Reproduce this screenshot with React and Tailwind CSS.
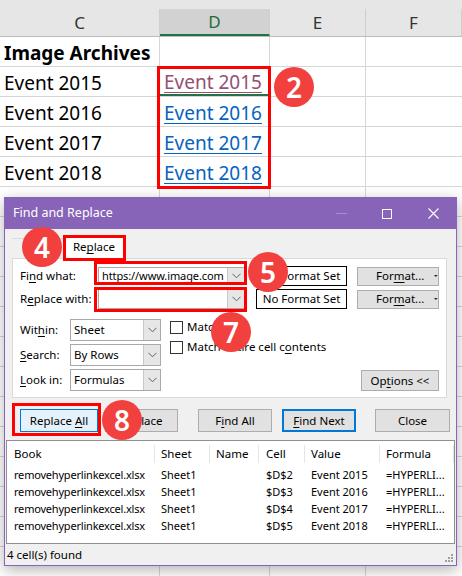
import React from 'react';

const cols = [
    { key: 'C', w: 'w-[160px]' },
    { key: 'D', w: 'w-[110px]' },
    { key: 'E', w: 'w-[96px]' },
    { key: 'F', w: 'w-[96px]' },
];

const sheetRows = [
    ['Image Archives', ''],
    ['Event 2015', 'Event 2015'],
    ['Event 2016', 'Event 2016'],
    ['Event 2017', 'Event 2017'],
    ['Event 2018', 'Event 2018'],
];

const results = [
    ['$D$2', 'Event 2015'],
    ['$D$3', 'Event 2016'],
    ['$D$4', 'Event 2017'],
    ['$D$5', 'Event 2018'],
];

// small helper for access-key underline
const U = ({ children }) => <span className="underline underline-offset-2">{children}</span>;

const Badge = ({ n, className }) => (
    <div className={`absolute w-[40px] h-[40px] rounded-full bg-[#f2403f] text-white flex items-center justify-center text-[28px] font-semibold leading-none ${className}`}>
        {n}
    </div>
);

const RedBox = ({ className }) => (
    <div className={`absolute border-[3px] border-[#ff0000] pointer-events-none ${className}`} />
);

const Chevron = () => (
    <svg width="9" height="6" viewBox="0 0 9 6" fill="none" stroke="#606060" strokeWidth="1">
        <path d="M0.5 0.8 L4.5 4.8 L8.5 0.8" />
    </svg>
);

const Combo = ({ value, w, h = 'h-[18px]', text = 'text-[11.5px]' }) => (
    <div className={`${w} ${h} flex bg-white border border-[#a9a9a9]`}>
        <div className={`flex-1 pl-[3px] flex items-center ${text} text-black whitespace-nowrap overflow-hidden`}>{value}</div>
        <div className="w-[17px] bg-[#e6e6e6] border-l border-[#c8c8c8] flex items-center justify-center">
            <Chevron />
        </div>
    </div>
);

const Btn = ({ children, className = '' }) => (
    <div className={`h-[23px] flex items-center justify-center text-[11.5px] text-black bg-[#e1e1e1] border border-[#adadad] ${className}`}>
        <span>{children}</span>
    </div>
);

const FormatBtn = () => (
    <div className="w-[82px] h-[19px] flex items-center bg-[#e1e1e1] border border-[#adadad] text-[11.5px] text-black pl-[18px]">
        <span>For<U>m</U>at...</span>
        <svg className="ml-[10px]" width="7" height="4" viewBox="0 0 7 4"><path d="M0 0 H7 L3.5 4 Z" fill="#222" /></svg>
    </div>
);

const Checkbox = () => <div className="w-[13px] h-[13px] bg-white border border-[#333] shrink-0" />;

export default function App() {
    return (
        <div className="relative w-[462px] h-[576px] overflow-hidden bg-white font-['Noto_Sans',sans-serif]">
            {/* spreadsheet */}
            <div className="h-[9px] bg-[#e6e6e6]" />
            <div className="flex h-[28px] bg-[#e6e6e6] border-b border-[#bcbcbc]">
                {cols.map(c => (
                    <div
                        key={c.key}
                        className={`${c.w} flex items-center justify-center text-[17px] border-r border-[#cfcfcf] ${c.key === 'D' ? 'bg-[#d2d2d2] text-[#1e6b3f] border-b-2 border-b-[#217346]' : 'text-[#333]'}`}
                    >
                        {c.key}
                    </div>
                ))}
            </div>
            {Array.from({ length: 18 }).map((_, i) => {
                const r = sheetRows[i] || ['', ''];
                return (
                    <div key={i} className="flex h-[30px] border-b border-[#d6d6d6]">
                        <div className={`w-[160px] border-r border-[#d6d6d6] pl-[4px] pt-[4px] flex items-center text-[19px] text-black whitespace-nowrap ${i === 0 ? 'font-bold' : ''}`}>
                            {r[0]}
                        </div>
                        <div className={`w-[110px] border-r border-[#d6d6d6] pl-[4px] pt-[4px] flex items-center text-[19px] ${i === 1 ? 'border-b-2 border-b-[#217346]' : ''}`}>
                            {r[1] && (
                                <span className={`underline underline-offset-[3px] ${i === 1 ? 'text-[#954f72]' : 'text-[#0563c1]'}`}>{r[1]}</span>
                            )}
                        </div>
                        <div className="w-[96px] border-r border-[#d6d6d6]" />
                        <div className="w-[96px]" />
                    </div>
                );
            })}

            {/* Find and Replace dialog */}
            <div className="absolute left-[4px] top-[197px] w-[453px] h-[369px] bg-[#f0f0f0] border border-[#8764b8] shadow-[0_4px_14px_rgba(0,0,0,0.3)] flex flex-col">
                <div className="h-[31px] bg-[#8764b8] flex items-center text-white shrink-0">
                    <span className="pl-[8px] text-[12.5px] flex-1">Find and Replace</span>
                    <div className="w-[46px] flex justify-center">
                        <div className="w-[11px] h-px bg-[#a68fcf]" />
                    </div>
                    <div className="w-[46px] flex justify-center">
                        <div className="w-[10px] h-[10px] border border-white" />
                    </div>
                    <div className="w-[46px] flex justify-center">
                        <svg width="11" height="11" viewBox="0 0 11 11" stroke="white" strokeWidth="1.1"><path d="M0.5 0.5 L10.5 10.5 M10.5 0.5 L0.5 10.5" /></svg>
                    </div>
                </div>

                {/* tab strip */}
                <div className="flex h-[29px] items-end pl-[7px] shrink-0">
                    <div className="w-[52px] border-t border-[#d9d9d9] self-start mt-[9px]" />
                    <div className="w-[60px] h-[22px] bg-white flex items-center justify-center text-[11.5px] text-black">
                        <span>Re<U>p</U>lace</span>
                    </div>
                </div>

                {/* tab pane */}
                <div className="ml-[7px] w-[435px] h-[140px] bg-white border border-[#d9d9d9] pl-[7px] pt-[8px] shrink-0 text-[11.5px] text-black">
                    <div className="flex items-center h-[18px]">
                        <div className="w-[78px]">Fi<U>n</U>d what:</div>
                        <Combo value="https://www.image.com" w="w-[147px]" text="text-[11px] tracking-[-0.1px]" />
                        <div className="ml-[11px] w-[91px] h-[20px] border border-black flex items-center justify-center">No Format Set</div>
                        <div className="ml-[10px]"><FormatBtn /></div>
                    </div>
                    <div className="flex items-center h-[20px] mt-[4px]">
                        <div className="w-[78px]">R<U>e</U>place with:</div>
                        <Combo value="" w="w-[147px]" h="h-[20px]" />
                        <div className="ml-[11px] w-[91px] h-[20px] border border-black flex items-center justify-center">No Format Set</div>
                        <div className="ml-[10px]"><FormatBtn /></div>
                    </div>

                    <div className="flex mt-[10px]">
                        <div className="flex flex-col gap-[3px]">
                            <div className="flex items-center">
                                <div className="w-[50px]">Wit<U>h</U>in:</div>
                                <Combo value="Sheet" w="w-[91px]" h="h-[22px]" />
                            </div>
                            <div className="flex items-center">
                                <div className="w-[50px]"><U>S</U>earch:</div>
                                <Combo value="By Rows" w="w-[91px]" h="h-[22px]" />
                            </div>
                            <div className="flex items-center">
                                <div className="w-[50px]"><U>L</U>ook in:</div>
                                <Combo value="Formulas" w="w-[91px]" h="h-[22px]" />
                            </div>
                        </div>
                        <div className="ml-[9px] flex flex-col gap-[6px] pt-[1px]">
                            <div className="flex items-center gap-[4px] h-[14px]">
                                <Checkbox /> <span>Match case</span>
                            </div>
                            <div className="flex items-center gap-[4px] h-[14px]">
                                <Checkbox /> <span>Match entire cell c<U>o</U>ntents</span>
                            </div>
                        </div>
                        <div className="ml-auto mr-[7px] self-end">
                            <Btn className="w-[78px] !h-[21px]">Op<U>t</U>ions &lt;&lt;</Btn>
                        </div>
                    </div>
                </div>

                {/* buttons */}
                <div className="flex items-center mt-[11px] pl-[15px] shrink-0">
                    <Btn className="w-[78px] !bg-[#e5f1fb] !border-[#0078d7]">Replace <U>A</U>ll</Btn>
                    <Btn className="w-[73px] ml-[7px]">Replace</Btn>
                    <Btn className="w-[74px] ml-[20px]">F<U>i</U>nd All</Btn>
                    <Btn className="w-[74px] ml-[10px] !border-2 !border-[#0078d7]"><U>F</U>ind Next</Btn>
                    <Btn className="w-[75px] ml-[19px]">Close</Btn>
                </div>

                {/* results list */}
                <div className="mt-[8px] mx-[1px] h-[104px] bg-white border border-[#909090] shrink-0 text-[11px] text-black">
                    <div className="flex h-[26px] items-center text-[11.5px]">
                        <div className="w-[148px] pl-[7px] h-[18px] border-r border-[#e5e5e5] flex items-center">Book</div>
                        <div className="w-[55px] pl-[6px] h-[18px] border-r border-[#e5e5e5] flex items-center">Sheet</div>
                        <div className="w-[49px] pl-[6px] h-[18px] border-r border-[#e5e5e5] flex items-center">Name</div>
                        <div className="w-[46px] pl-[7px] h-[18px] border-r border-[#e5e5e5] flex items-center">Cell</div>
                        <div className="w-[75px] pl-[6px] h-[18px] border-r border-[#e5e5e5] flex items-center">Value</div>
                        <div className="w-[74px] pl-[6px] h-[18px] border-r border-[#e5e5e5] flex items-center">Formula</div>
                    </div>
                    {results.map(r => (
                        <div key={r[0]} className="flex h-[17px] items-center whitespace-nowrap">
                            <div className="w-[148px] pl-[7px] tracking-[-0.2px]">removehyperlinkexcel.xlsx</div>
                            <div className="w-[55px] pl-[6px]">Sheet1</div>
                            <div className="w-[49px] pl-[6px]" />
                            <div className="w-[46px] pl-[7px]">{r[0]}</div>
                            <div className="w-[75px] pl-[6px]">{r[1]}</div>
                            <div className="w-[74px] pl-[6px]">=HYPERLI...</div>
                        </div>
                    ))}
                </div>

                {/* status bar */}
                <div className="flex-1 flex items-center pl-[2px] text-[11.5px] text-black relative">
                    4 cell(s) found
                    <svg className="absolute right-[2px] bottom-[2px]" width="9" height="9" viewBox="0 0 9 9" fill="#a0a0a0">
                        <rect x="6" y="0" width="2" height="2" />
                        <rect x="3" y="3" width="2" height="2" />
                        <rect x="6" y="3" width="2" height="2" />
                        <rect x="0" y="6" width="2" height="2" />
                        <rect x="3" y="6" width="2" height="2" />
                        <rect x="6" y="6" width="2" height="2" />
                    </svg>
                </div>
            </div>

            {/* annotations */}
            <RedBox className="left-[157px] top-[66px] w-[114px] h-[123px]" />
            <RedBox className="left-[63px] top-[235px] w-[63px] h-[26px]" />
            <RedBox className="left-[94px] top-[261px] w-[153px] h-[24px]" />
            <RedBox className="left-[94px] top-[287px] w-[153px] h-[25px]" />
            <RedBox className="left-[12px] top-[403px] w-[89px] h-[33px]" />

            <Badge n="2" className="left-[274px] top-[67px]" />
            <Badge n="4" className="left-[22px] top-[227px]" />
            <Badge n="5" className="left-[248px] top-[252px]" />
            <Badge n="7" className="left-[211px] top-[312px]" />
            <Badge n="8" className="left-[102px] top-[400px]" />
        </div>
    );
}
